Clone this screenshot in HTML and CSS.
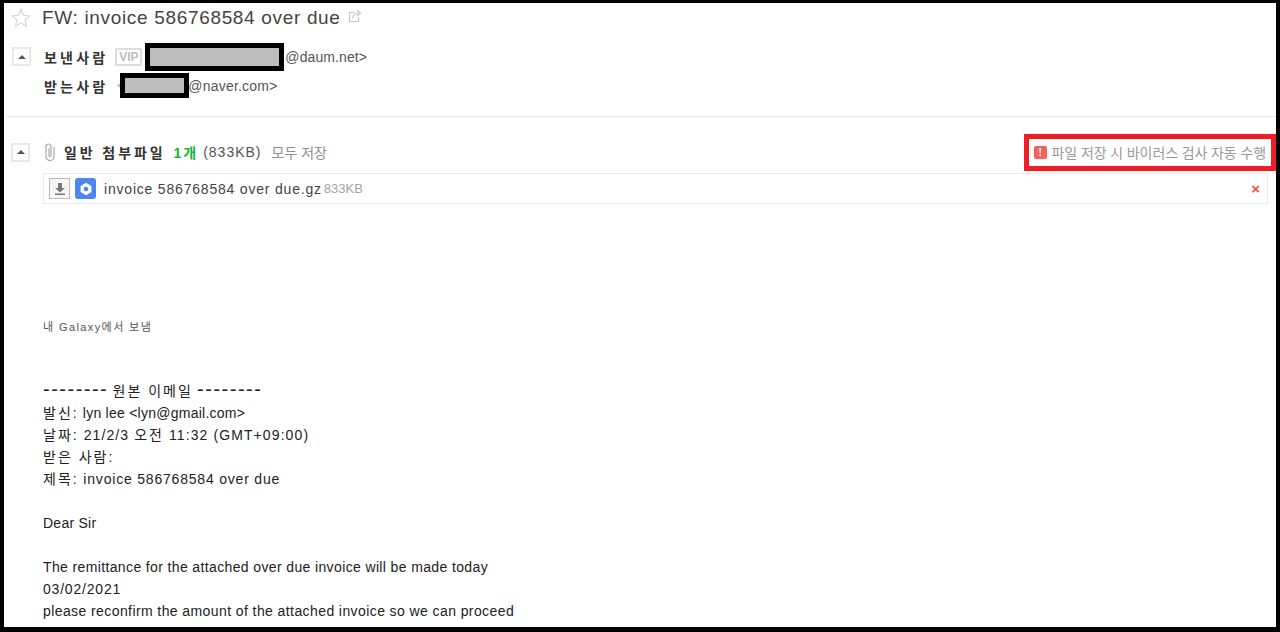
FILE: index.html
```html
<!DOCTYPE html>
<html lang="ko">
<head>
    <meta charset="UTF-8">
    <title>FW: invoice 586768584 over due</title>
    <link rel="stylesheet" href="styles.css">
</head>
<body>
    <div class="mail-frame">
        <!-- Subject -->
        <div class="subject">
            <svg class="star" width="20" height="20" viewBox="0 0 20 20"><path d="M10 1.500l2.500 5.800 6.300.6-4.800 4.100 1.500 6.200L10 15l-5.500 3.200L6 12 1.200 7.900l6.300-.6z" fill="#fff" stroke="#d8d8d8" stroke-width="1.200"/></svg>
            <span class="subject-text">FW: invoice 586768584 over due</span>
            <svg class="popout" width="14" height="14" viewBox="0 0 14 14"><path d="M6 3.500H1.500v9h9V8" fill="none" stroke="#c4c4c4" stroke-width="1.200"/><path d="M4.500 9.500C5 6 7.500 4 11 4M9 1.200l3.500 2.800L9 6.800" fill="none" stroke="#c4c4c4" stroke-width="1.200"/></svg>
        </div>

        <!-- Sender and receiver -->
        <div class="people">
            <div class="people-row">
                <button class="fold" type="button"><span class="fold-arrow"></span></button>
                <span class="people-label">보낸사람</span>
                <span class="vip">VIP</span>
                <span class="redact redact-from"></span>
                <span class="address">@daum.net&gt;</span>
            </div>
            <div class="people-row people-row-to">
                <span class="people-label">받는사람</span>
                <span class="angle">&lt;</span>
                <span class="redact redact-to"></span>
                <span class="address">@naver.com&gt;</span>
            </div>
        </div>

        <!-- Attachments -->
        <div class="attach-head">
            <button class="fold" type="button"><span class="fold-arrow"></span></button>
            <svg class="clip" width="10" height="18" viewBox="0 0 10 18"><path d="M9 4v9.500a4 4 0 0 1-8 0V3.500a2.500 2.500 0 0 1 5 0v9a1 1 0 0 1-2 0V5" fill="none" stroke="#a8a8a8" stroke-width="1.200"/></svg>
            <strong class="attach-title">일반 첨부파일</strong>
            <strong class="attach-count">1개</strong>
            <span class="attach-size">(833KB)</span>
            <span class="attach-save">모두 저장</span>
            <div class="virus-note">
                <span class="virus-icon">!</span>
                <span class="virus-text">파일 저장 시 바이러스 검사 자동 수행</span>
            </div>
        </div>
        <div class="file-row">
            <span class="file-down">
                <svg width="14" height="14" viewBox="0 0 14 14"><path d="M5 1h4v5h3L7 10.500 2 6h3zM2 11.500h10V13H2z" fill="#777"/></svg>
            </span>
            <span class="file-type">
                <svg width="14" height="14" viewBox="0 0 14 14"><path d="M7 .8l5.400 3.100v6.200L7 13.200 1.600 10.100V3.900z" fill="#fff"/><path d="M7 4.500l2.200 1.300v2.400L7 9.500 4.800 8.200V5.800z" fill="#4d86f0"/></svg>
            </span>
            <span class="file-name">invoice 586768584 over due.gz</span>
            <span class="file-size">833KB</span>
            <span class="file-remove">×</span>
        </div>

        <!-- Body -->
        <div class="mail-body">
            <p class="signature">내 Galaxy에서 보냄</p>
            <p><span class="dashes">--------</span> <span class="ko">원본 이메일</span> <span class="dashes">--------</span></p>
            <p class="tight"><span class="ko">발신:</span> lyn lee &lt;lyn@gmail.com&gt;</p>
            <p class="wider"><span class="ko">날짜:</span> 21/2/3 <span class="ko">오전</span> 11:32 (GMT+09:00)</p>
            <p><span class="ko">받은 사람:</span></p>
            <p class="wide"><span class="ko">제목:</span> invoice 586768584 over due</p>
            <p class="gap tight">Dear Sir</p>
            <p class="gap">The remittance for the attached over due invoice will be made today</p>
            <p class="wide">03/02/2021</p>
            <p class="last-line">please reconfirm the amount of the attached invoice so we can proceed</p>
        </div>
    </div>
</body>
</html>
```

FILE: styles.css
```css
html, body {
    margin: 0;
    padding: 0;
    height: 100%;
    overflow: hidden;
}

body {
    font-family: "Liberation Sans", "Noto Sans CJK KR", sans-serif;
    font-size: 14px;
    color: #333333;
    background-color: #000000;
}

.mail-frame {
    box-sizing: border-box;
    height: 632px;
    background-color: #ffffff;
    border-style: solid;
    border-color: #000000;
    border-width: 3px 4px 5px 4px;
    overflow: hidden;
}

/* Subject */
.subject {
    display: flex;
    align-items: center;
    height: 30px;
    padding-left: 7px;
}

.subject-text {
    margin-left: 11px;
    font-size: 19px;
    letter-spacing: 0.67px;
    color: #444444;
}

.popout {
    margin-left: 7px;
    margin-top: -4px;
}

/* Sender and receiver */
.people {
    padding: 9px 0 16px 5px;
    border-bottom: 1px solid #e6e6e6;
    margin-left: 3px;
}

.people-row {
    display: flex;
    align-items: center;
    height: 29px;
}

.people-row-to {
    padding-left: 32px;
}

.fold {
    box-sizing: border-box;
    width: 19px;
    height: 19px;
    padding: 0;
    margin-right: 13px;
    display: flex;
    align-items: center;
    justify-content: center;
    background-color: #ffffff;
    border: 2px solid #e8e8e8;
}

.fold-arrow {
    width: 0;
    height: 0;
    border-left: 4px solid transparent;
    border-right: 4px solid transparent;
    border-bottom: 4px solid #555555;
}

.people-label {
    font-weight: bold;
    letter-spacing: 3.2px;
    color: #333333;
}

.vip {
    box-sizing: border-box;
    width: 27px;
    height: 18px;
    margin-left: 7px;
    border: 2px solid #dddddd;
    color: #bcbcbc;
    font-size: 12px;
    font-weight: bold;
    line-height: 14px;
    text-align: center;
}

.redact {
    box-sizing: border-box;
    display: block;
    background-color: #bdbdbd;
    border: 5px solid #000000;
}

.redact-from {
    width: 139px;
    height: 28px;
    margin-left: 3px;
}

.redact-to {
    width: 69px;
    height: 25px;
}

.angle {
    width: 3px;
    margin-left: 9px;
    color: #999999;
    font-size: 10px;
}

.address {
    margin-left: 1px;
    letter-spacing: 0.1px;
    color: #555555;
}

.people-row-to .address {
    margin-left: -1px;
    letter-spacing: 0.2px;
}

/* Attachments */
.attach-head {
    display: flex;
    align-items: center;
    height: 38px;
    margin-top: 16px;
    padding-left: 7px;
}

.attach-head .fold {
    margin-right: 15px;
}

.attach-title {
    margin-left: 9px;
    color: #333333;
    letter-spacing: 2.9px;
}

.attach-count {
    margin-left: 8px;
    letter-spacing: 2px;
    color: #12b53a;
}

.attach-size {
    margin-left: 5px;
    letter-spacing: 1px;
    color: #555555;
}

.attach-save {
    margin-left: 10px;
    color: #8f8f8f;
}

.virus-note {
    box-sizing: border-box;
    display: flex;
    align-items: center;
    height: 37px;
    margin-left: auto;
    padding: 0 5px;
    border: 5px solid #f01c26;
    color: #999999;
    font-size: 14px;
}

.virus-text {
    letter-spacing: -0.1px;
}

.virus-icon {
    box-sizing: border-box;
    width: 13px;
    height: 13px;
    margin-right: 5px;
    border-radius: 2px;
    background-color: #f4625c;
    color: #ffffff;
    font-size: 10px;
    font-weight: bold;
    line-height: 13px;
    text-align: center;
}

.file-row {
    box-sizing: border-box;
    display: flex;
    align-items: center;
    height: 31px;
    margin: 2px 8px 0 39px;
    padding-left: 5px;
    border: 1px solid #e9e9e9;
}

.file-down {
    box-sizing: border-box;
    width: 21px;
    height: 21px;
    display: flex;
    align-items: center;
    justify-content: center;
    border: 1px solid #bbbbbb;
    background-color: #f6f6f6;
}

.file-type {
    width: 21px;
    height: 21px;
    margin-left: 5px;
    display: flex;
    align-items: center;
    justify-content: center;
    border-radius: 3px;
    background-color: #4d86f0;
}

.file-name {
    margin-left: 8px;
    letter-spacing: 0.8px;
    color: #444444;
}

.file-size {
    margin-left: 2px;
    font-size: 13px;
    color: #a3a3a3;
}

.file-remove {
    margin-left: auto;
    margin-right: 7px;
    color: #f0524c;
    font-size: 15px;
    font-weight: bold;
    line-height: 15px;
}

/* Body */
.mail-body {
    padding: 112px 0 0 39px;
    letter-spacing: 0.37px;
    color: #222222;
}

.mail-body p {
    margin: 0;
    height: 22px;
    line-height: 22px;
}

.mail-body .signature {
    height: 22px;
    margin-bottom: 42px;
    font-size: 11px;
    letter-spacing: 1.4px;
    color: #555555;
}

.mail-body .gap {
    margin-top: 22px;
}

.mail-body .tight {
    letter-spacing: 0.25px;
}

.mail-body .wide {
    letter-spacing: 0.8px;
}

.mail-body .wider {
    letter-spacing: 1.1px;
}

.mail-body .last-line {
    letter-spacing: 0.41px;
}

.ko {
    letter-spacing: 2px;
}

.dashes {
    font-size: 20px;
    line-height: 1px;
    letter-spacing: 1.5px;
}
```
